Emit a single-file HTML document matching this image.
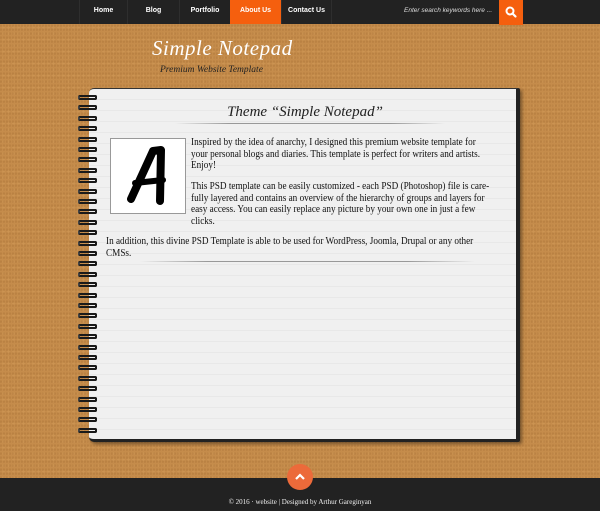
<!DOCTYPE html>
<html><head><meta charset="utf-8"><style>
*{margin:0;padding:0;box-sizing:border-box}
body{width:600px;height:511px;overflow:hidden;position:relative;font-family:"Liberation Serif",serif;
background:#c58c4b;
background-image:radial-gradient(circle at 30% 40%,rgba(120,70,20,.15) 0 1px,transparent 1.5px),radial-gradient(circle at 70% 60%,rgba(240,190,120,.15) 0 1px,transparent 1.5px);
background-size:3px 4px,5px 6px}
.nav{position:absolute;left:0;top:0;width:600px;height:24px;background:#222}
.nav a{position:absolute;top:0;height:24px;text-align:center;color:#fff;font:bold 7px "Liberation Sans",sans-serif;line-height:22px;text-decoration:none;border-left:1px solid #2e2e2e}
.srch{position:absolute;left:404px;top:0;color:#ddd;font:italic 6.5px "Liberation Sans",sans-serif;line-height:22px}
.sbtn{position:absolute;left:499px;top:0;width:24px;height:25px;background:#f55f0e}
.logo{position:absolute;left:152px;top:36px;color:#fff;font:italic 21px "Liberation Serif",serif;letter-spacing:.5px}
.sub{position:absolute;left:160px;top:65px;color:#222;font:italic 9.5px "Liberation Serif",serif}
.paper{position:absolute;left:89px;top:88px;width:431px;height:354px;background:#efefef;border-top:1.5px solid #333;border-right:4px solid #222;border-bottom:3px solid #222;border-radius:5px 2px 2px 5px;
background-image:repeating-linear-gradient(#f0f0f0 0 10px,#e8e8e8 10px 11px);box-shadow:2px 2px 3px rgba(0,0,0,.4)}
.title{position:absolute;left:0;width:600px;top:104px;text-align:center;font:italic 15px "Liberation Serif",serif;color:#222;padding-left:10px}
.line{position:absolute;height:1px;background:linear-gradient(90deg,transparent,#999 20%,#999 80%,transparent)}
.box{position:absolute;left:110px;top:138px;width:76px;height:76px;border:1px solid #999;background:#fff}
.txt{position:absolute;font-size:10px;line-height:11.7px;color:#111;white-space:nowrap;transform:scaleX(.92);transform-origin:0 0}
.ring{position:absolute;left:78px;width:19px;height:5px;border:2px solid #1a1a1a;border-radius:2px;border-left-color:#444}
.foot{position:absolute;left:0;top:478px;width:600px;height:33px;background:#222;color:#eee;font-size:7px;text-align:center;padding-top:20px}
.up{position:absolute;left:287px;top:464px;width:26px;height:26px;border-radius:50%;background:#ec6a3a}
</style></head><body>
<div class="nav">
<a style="left:79px;width:48px">Home</a>
<a style="left:127px;width:52px">Blog</a>
<a style="left:179px;width:51px">Portfolio</a>
<a style="left:230px;width:51px;background:#f55f0e;border:0">About Us</a>
<a style="left:281px;width:51px;border-right:1px solid #2e2e2e">Contact Us</a>
<div class="srch">Enter search keywords here ...</div>
<div class="sbtn"><svg width="24" height="24" viewBox="0 0 24 24"><circle cx="11" cy="11" r="3.5" fill="none" stroke="#fff" stroke-width="2"/><path d="M13.5 13.5l3 3" stroke="#fff" stroke-width="2.2" stroke-linecap="round"/></svg></div>
</div>
<div class="logo">Simple Notepad</div>
<div class="sub">Premium Website Template</div>
<div class="paper"></div>
<div id="rings"></div>
<div class="title">Theme “Simple Notepad”</div>
<div class="line" style="left:175px;top:123px;width:270px"></div>
<div class="box"><svg width="74" height="74" viewBox="0 0 74 74"><path d="M20 60 L42 12 L50 11 L49 62" fill="none" stroke="#000" stroke-width="8" stroke-linejoin="round" stroke-linecap="round"/><path d="M24 44 L52 41" stroke="#000" stroke-width="6" stroke-linecap="round"/></svg></div>
<div class="txt" style="left:191px;top:137px">Inspired by the idea of anarchy, I designed this premium website template for<br>your personal blogs and diaries. This template is perfect for writers and artists.<br>Enjoy!</div>
<div class="txt" style="left:191px;top:181px">This PSD template can be easily customized - each PSD (Photoshop) file is care-<br>fully layered and contains an overview of the hierarchy of groups and layers for<br>easy access. You can easily replace any picture by your own one in just a few<br>clicks.</div>
<div class="txt" style="left:106px;top:236px">In addition, this divine PSD Template is able to be used for WordPress, Joomla, Drupal or any other<br>CMSs.</div>
<div class="line" style="left:140px;top:261px;width:335px"></div>
<div class="foot">© 2016 · website | Designed by Arthur Gareginyan</div>
<div class="up"><svg width="26" height="26" viewBox="0 0 26 26"><path d="M9 15l4-4 4 4" fill="none" stroke="#fff" stroke-width="2.2"/></svg></div>
<script>
var r=document.getElementById('rings'),h='';for(var y=95;y<438;y+=10.4)h+='<div class="ring" style="top:'+y.toFixed(1)+'px"></div>';r.innerHTML=h;
</script>
</body></html>
